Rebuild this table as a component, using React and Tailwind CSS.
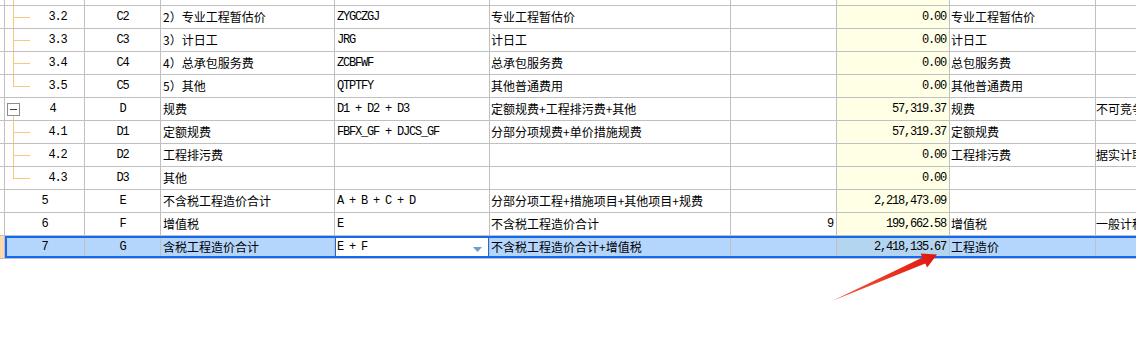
import React from "react";

const MONO = "font-['Liberation_Mono',monospace] text-[12px] tracking-[-1.2px]";
const CJK = "font-['Noto_Sans_CJK_SC',sans-serif] text-[12px]";
const LINE = "border-[#c0c0c0]";

// Column widths (including the 1px right rule of each cell)
const W = {
  pre: "w-[5px]",
  idx: "w-[80px]",
  code: "w-[76px]",
  name: "w-[174px]",
  formula: "w-[155px]",
  desc: "w-[241px]",
  rate: "w-[106px]",
  amount: "w-[113px]",
  kind: "w-[146px]",
};

const rows = [
  { idx: "3.2", tree: "mid", code: "C2", name: "2）专业工程暂估价", formula: "ZYGCZGJ", desc: "专业工程暂估价", amount: "0.00", kind: "专业工程暂估价" },
  { idx: "3.3", tree: "mid", code: "C3", name: "3）计日工", formula: "JRG", desc: "计日工", amount: "0.00", kind: "计日工" },
  { idx: "3.4", tree: "mid", code: "C4", name: "4）总承包服务费", formula: "ZCBFWF", desc: "总承包服务费", amount: "0.00", kind: "总包服务费" },
  { idx: "3.5", tree: "last", code: "C5", name: "5）其他", formula: "QTPTFY", desc: "其他普通费用", amount: "0.00", kind: "其他普通费用" },
  { idx: "4", tree: "parent", code: "D", name: "规费", formula: "D1 + D2 + D3", desc: "定额规费+工程排污费+其他", amount: "57,319.37", kind: "规费", note: "不可竞争费" },
  { idx: "4.1", tree: "mid", code: "D1", name: "定额规费", formula: "FBFX_GF + DJCS_GF", desc: "分部分项规费+单价措施规费", amount: "57,319.37", kind: "定额规费" },
  { idx: "4.2", tree: "mid", code: "D2", name: "工程排污费", formula: "", desc: "", amount: "0.00", kind: "工程排污费", note: "据实计取" },
  { idx: "4.3", tree: "last", code: "D3", name: "其他", formula: "", desc: "", amount: "0.00", kind: "" },
  { idx: "5", code: "E", name: "不含税工程造价合计", formula: "A + B + C + D", desc: "分部分项工程+措施项目+其他项目+规费", amount: "2,218,473.09", kind: "" },
  { idx: "6", code: "F", name: "增值税", formula: "E", desc: "不含税工程造价合计", rate: "9", amount: "199,662.58", kind: "增值税", note: "一般计税方法" },
  { idx: "7", code: "G", name: "含税工程造价合计", formula: "E + F", desc: "不含税工程造价合计+增值税", amount: "2,418,135.67", kind: "工程造价", selected: true },
];

function TreeMarks({ tree }) {
  if (tree === "parent") {
    return (
      <>
        <div className="absolute left-[2px] top-[5px] w-[13px] h-[13px] border border-[#8c8c8c] bg-white flex items-center justify-center">
          <div className="w-[7px] h-px bg-[#404040]" />
        </div>
        <div className="absolute left-[8px] top-[18px] bottom-0 w-px bg-[#f9c87c]" />
      </>
    );
  }
  if (tree === "mid" || tree === "last") {
    return (
      <>
        <div className={`absolute left-[8px] top-0 w-px bg-[#f9c87c] ${tree === "last" ? "h-[11px]" : "bottom-0"}`} />
        <div className="absolute left-[8px] top-[11px] w-[17px] h-px bg-[#f9c87c]" />
      </>
    );
  }
  return null;
}

function Row({ r }) {
  const sel = r.selected;
  const cell = `h-full shrink-0 border-r ${LINE} flex items-center overflow-hidden whitespace-nowrap`;
  const idxPad = r.tree === "parent" ? "pl-[16px]" : r.tree ? "pl-[26px]" : "";
  return (
    <div className={`relative flex h-[23px] border-b ${LINE} ${sel ? "bg-[#b5d6fc]" : "bg-white"} text-black`}>
      <div className={`${W.pre} ${cell} ${sel ? "bg-[#fcd9ae]" : ""}`} />
      <div className={`${W.idx} ${cell} relative justify-center ${idxPad} ${MONO}`}>
        <TreeMarks tree={r.tree} />
        <span>{r.idx}</span>
      </div>
      <div className={`${W.code} ${cell} justify-center ${MONO}`}>{r.code}</div>
      <div className={`${W.name} ${cell} pl-[2px] ${CJK}`}>{r.name}</div>
      <div className={`${W.formula} ${cell} relative pl-[2px] ${MONO} whitespace-pre`}>
        {sel ? (
          <div className="absolute -left-px -right-px top-0 bottom-0 z-10 bg-white border-2 border-[#1469f0] flex items-center pl-[1px] pr-[6px]">
            <span className="flex-1 whitespace-pre">{r.formula}</span>
            <svg width="9" height="5" viewBox="0 0 9 5" className="mt-[4px]">
              <path d="M0 0 H9 L4.5 5 Z" fill="#6b9fd0" />
            </svg>
          </div>
        ) : (
          r.formula
        )}
      </div>
      <div className={`${W.desc} ${cell} pl-[1px] ${CJK}`}>{r.desc}</div>
      <div className={`${W.rate} ${cell} justify-end pr-[3px] ${MONO}`}>{r.rate || ""}</div>
      <div className={`${W.amount} ${cell} justify-end pr-[3px] ${MONO} ${sel ? "bg-[#b3d5ef]" : "bg-[#ffffe6]"}`}>{r.amount}</div>
      <div className={`${W.kind} ${cell} pl-[1px] ${CJK}`}>{r.kind}</div>
      <div className={`flex-1 min-w-0 h-full flex items-center overflow-hidden whitespace-nowrap ${CJK}`}>{r.note || ""}</div>
      {sel && <div className="absolute left-[5px] -right-[4px] top-0 bottom-[0px] border-2 border-[#1469f0] pointer-events-none" />}
    </div>
  );
}

function TopStub() {
  const cell = `h-full shrink-0 border-r ${LINE}`;
  return (
    <div className={`flex h-[6px] border-b ${LINE} bg-white`}>
      <div className={`${W.pre} ${cell}`} />
      <div className={`${W.idx} ${cell} relative`}>
        <div className="absolute left-[8px] top-0 bottom-0 w-px bg-[#f9c87c]" />
      </div>
      <div className={`${W.code} ${cell}`} />
      <div className={`${W.name} ${cell}`} />
      <div className={`${W.formula} ${cell}`} />
      <div className={`${W.desc} ${cell}`} />
      <div className={`${W.rate} ${cell}`} />
      <div className={`${W.amount} ${cell} bg-[#ffffe6]`} />
      <div className={`${W.kind} ${cell}`} />
      <div className="flex-1" />
    </div>
  );
}

export default function App() {
  return (
    <div className="relative w-[1136px] h-[352px] bg-white overflow-hidden">
      <div className="flex flex-col">
        <TopStub />
        {rows.map((r) => (
          <Row key={r.idx} r={r} />
        ))}
      </div>
      {/* red annotation arrow pointing at the total */}
      <svg className="absolute left-0 top-0 pointer-events-none" width="1136" height="352">
        <defs>
          <linearGradient id="arrowFill" x1="832" y1="301" x2="937" y2="255" gradientUnits="userSpaceOnUse">
            <stop offset="0" stopColor="#f5593f" />
            <stop offset="1" stopColor="#e0160e" />
          </linearGradient>
        </defs>
        <polygon
          points="832,301 922.5,257.6 920.6,253.6 937,254.5 927.2,267.5 925.3,263.5"
          fill="url(#arrowFill)"
        />
      </svg>
    </div>
  );
}
